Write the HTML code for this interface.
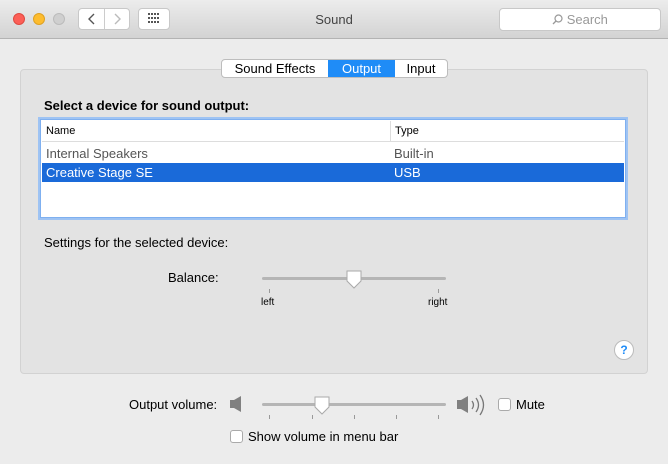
<!DOCTYPE html><html><head><style>
body{margin:0;width:668px;height:464px;background:#ececec;font-family:"Liberation Sans",sans-serif;font-size:13px;color:#000;position:relative;overflow:hidden}
.a{position:absolute}
.tb{left:0;top:0;width:668px;height:38px;background:linear-gradient(#ececec,#d3d3d3);border-bottom:1px solid #b3b3b3}
.dot{width:12px;height:12px;border-radius:50%;top:13px}
.btn{background:#fff;border:1px solid #c8c8c8;border-radius:4px;box-sizing:border-box}
.tick{width:1px;height:4px;background:#999}
.cb{width:13px;height:13px;background:#fff;border:1px solid #aaa;border-radius:3px;box-sizing:border-box}
</style></head><body>
<div class="a tb"></div>
<div class="a dot" style="left:13px;background:#fc5f57;border:1px solid #de4a41;box-sizing:border-box"></div>
<div class="a dot" style="left:33px;background:#fdbc2e;border:1px solid #dea123;box-sizing:border-box"></div>
<div class="a dot" style="left:53px;background:#cfcfcf;border:1px solid #bbb;box-sizing:border-box"></div>
<div class="a btn" style="left:78px;top:8px;width:52px;height:22px"></div>
<div class="a" style="left:104px;top:9px;width:1px;height:20px;background:#ccc"></div>
<svg class="a" style="left:86px;top:12px" width="12" height="14"><path d="M8 2L3 7l5 5" fill="none" stroke="#555" stroke-width="1.4"/></svg>
<svg class="a" style="left:111px;top:12px" width="12" height="14"><path d="M4 2l5 5-5 5" fill="none" stroke="#bbb" stroke-width="1.4"/></svg>
<div class="a btn" style="left:138px;top:8px;width:32px;height:22px"></div>
<svg class="a" style="left:148px;top:13px" width="12" height="12"><g fill="#555"><rect x="0" y="0" width="2" height="2"/><rect x="3" y="0" width="2" height="2"/><rect x="6" y="0" width="2" height="2"/><rect x="9" y="0" width="2" height="2"/><rect x="0" y="4" width="2" height="2"/><rect x="3" y="4" width="2" height="2"/><rect x="6" y="4" width="2" height="2"/><rect x="9" y="4" width="2" height="2"/><rect x="0" y="8" width="2" height="2"/><rect x="3" y="8" width="2" height="2"/><rect x="6" y="8" width="2" height="2"/><rect x="9" y="8" width="2" height="2"/></g></svg>
<div class="a" style="left:0;width:668px;top:12px;text-align:center;color:#444">Sound</div>
<div class="a btn" style="left:499px;top:8px;width:162px;height:23px;color:#999;text-align:center;line-height:21px"><svg width="11" height="11" style="vertical-align:-1px"><circle cx="6.5" cy="4.5" r="3.5" fill="none" stroke="#999" stroke-width="1.2"/><path d="M4 7L1 10" stroke="#999" stroke-width="1.3"/></svg> Search</div>
<div class="a" style="left:20px;top:69px;width:626px;height:303px;background:#e3e3e3;border:1px solid #d2d2d2;border-radius:4px"></div>
<div class="a" style="left:221px;top:59px;width:227px;height:19px;background:#fff;border:1px solid #bdbdbd;border-radius:4px;overflow:hidden;box-sizing:border-box">
<span class="a" style="left:0;width:106px;text-align:center;top:1px">Sound Effects</span>
<span class="a" style="left:106px;width:67px;height:19px;background:#1f8cf7;color:#fff;text-align:center;line-height:17px">Output</span>
<span class="a" style="left:173px;width:52px;text-align:center;top:1px">Input</span></div>
<div class="a" style="left:44px;top:98px;font-weight:bold">Select a device for sound output:</div>
<div class="a" style="left:40px;top:119px;width:586px;height:99px;background:#fff;border:1px solid #7fb0f0;box-shadow:0 0 0 2px #9ec3f3;box-sizing:border-box"></div>
<div class="a" style="left:42px;top:121px;width:582px;height:20px;border-bottom:1px solid #ddd;font-size:11px"><span class="a" style="left:4px;top:4px">Name</span><span class="a" style="left:348px;top:0;width:1px;height:20px;background:#ddd"></span><span class="a" style="left:353px;top:4px">Type</span></div>
<div class="a" style="left:46px;top:146px;color:#555">Internal Speakers</div>
<div class="a" style="left:394px;top:146px;color:#555">Built-in</div>
<div class="a" style="left:42px;top:163px;width:582px;height:19px;background:#1a6ad9;color:#fff"><span class="a" style="left:4px;top:2px">Creative Stage SE</span><span class="a" style="left:352px;top:2px">USB</span></div>
<div class="a" style="left:44px;top:235px">Settings for the selected device:</div>
<div class="a" style="left:168px;top:270px">Balance:</div>
<div class="a" style="left:262px;top:277px;width:184px;height:3px;background:#b5b5b5;border-radius:2px"></div>
<div class="a tick" style="left:269px;top:289px"></div><div class="a tick" style="left:438px;top:289px"></div>
<svg class="a" style="left:345px;top:270px" width="18" height="20"><path d="M2 1h14v10l-7 7-7-7z" fill="#fff" stroke="#aaa"/></svg>
<div class="a" style="left:261px;top:297px;font-size:10px">left</div>
<div class="a" style="left:428px;top:297px;font-size:10px">right</div>
<div class="a" style="left:614px;top:340px;width:18px;height:18px;border-radius:50%;background:#fff;border:1px solid #bbb;color:#1f8cf7;text-align:center;font-weight:bold;line-height:18px;font-size:12px">?</div>
<div class="a" style="left:129px;top:397px">Output volume:</div>
<svg class="a" style="left:229px;top:395px" width="14" height="18"><path d="M1 5h4l7-4v16l-7-4H1z" fill="#808080"/></svg>
<div class="a" style="left:262px;top:403px;width:184px;height:3px;background:#b5b5b5;border-radius:2px"></div>
<div class="a tick" style="left:269px;top:415px"></div><div class="a tick" style="left:312px;top:415px"></div><div class="a tick" style="left:354px;top:415px"></div><div class="a tick" style="left:396px;top:415px"></div><div class="a tick" style="left:438px;top:415px"></div>
<svg class="a" style="left:313px;top:396px" width="18" height="20"><path d="M2 1h14v10l-7 7-7-7z" fill="#fff" stroke="#aaa"/></svg>
<svg class="a" style="left:456px;top:393px" width="34" height="24"><path d="M1 7h4l7-4v17l-7-4H1z" fill="#808080"/><path d="M16 8q3 4 0 8M20 5q5 7 0 14M24 2q7 10 0 20" fill="none" stroke="#777" stroke-width="1.3"/></svg>
<div class="a cb" style="left:498px;top:398px"></div><div class="a" style="left:516px;top:397px">Mute</div>
<div class="a cb" style="left:230px;top:430px"></div><div class="a" style="left:248px;top:429px">Show volume in menu bar</div>
</body></html>
